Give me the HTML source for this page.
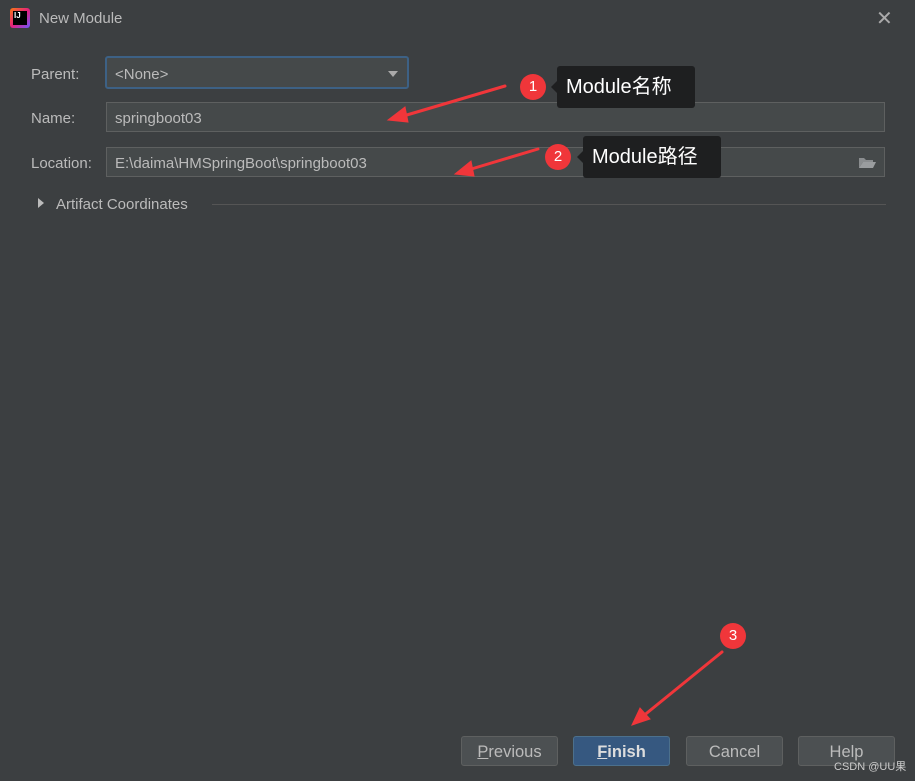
<!DOCTYPE html>
<html><head><style>
body{margin:0;width:915px;height:781px;background:#3c3f41;font-family:"Liberation Sans","Noto Sans CJK SC",sans-serif;color:#bbbbbb;position:relative;overflow:hidden}
.a{position:absolute}
.lbl{font-size:15px;color:#bbb}
.fld{position:absolute;background:#45494a;border:1px solid #5e6060;box-sizing:border-box;font-size:15px;color:#bbb;padding-left:8px;line-height:32px}
.btn{position:absolute;top:736px;width:97px;height:30px;box-sizing:border-box;border:1px solid #5e6060;background:#4c5052;border-radius:3px;font-size:16.5px;text-align:center;line-height:31px;color:#bbb}
.tip{position:absolute;background:#1e1f20;color:#fff;font-size:20px;border-radius:3px;line-height:43px;padding-left:9px;box-sizing:border-box}
.c{position:absolute;width:26px;height:26px;border-radius:50%;background:#f0363a;color:#fff;font-size:15px;text-align:center;line-height:26px}
</style></head><body>
<div class="a" style="left:10px;top:8px;width:20px;height:20px;background:linear-gradient(135deg,#f97a12,#e5217d,#6b57ff);border-radius:3px"></div>
<div class="a" style="left:13px;top:11px;width:14px;height:14px;background:#000;color:#fff;font-size:8px;font-weight:bold;line-height:9px;padding-left:1px;box-sizing:border-box">IJ</div>
<div class="a" style="left:39px;top:10px;font-size:15px;color:#bbb">New Module</div>
<div class="a" style="left:876px;top:6px;font-size:20px;color:#aaa">✕</div>
<div class="a lbl" style="left:31px;top:66px">Parent:</div>
<div class="a lbl" style="left:31px;top:110px">Name:</div>
<div class="a lbl" style="left:31px;top:155px">Location:</div>
<div class="fld" style="left:105px;top:56px;width:304px;height:33px;border:2px solid #3d6185;border-radius:3px;line-height:33px;background:#45494a">&lt;None&gt;</div>
<div class="a" style="left:388px;top:71px;width:0;height:0;border-left:5px solid transparent;border-right:5px solid transparent;border-top:6px solid #aaa"></div>
<div class="fld" style="left:106px;top:102px;width:779px;height:30px">springboot03</div>
<div class="fld" style="left:106px;top:147px;width:779px;height:30px">E:\daima\HMSpringBoot\springboot03</div>
<svg class="a" style="left:858px;top:155px" width="18" height="14"><path d="M1 3h5l2 2h7v2H5L1 13z" fill="#8a8d8f"/><path d="M5 7h13l-3 6H1z" fill="#9a9d9f"/></svg>
<div class="a" style="left:38px;top:198px;width:0;height:0;border-top:5px solid transparent;border-bottom:5px solid transparent;border-left:6px solid #bbb"></div>
<div class="a" style="left:56px;top:196px;font-size:15px">Artifact Coordinates</div>
<div class="a" style="left:212px;top:204px;width:674px;height:1px;background:#555"></div>
<svg class="a" style="left:0;top:0" width="915" height="781">
<g fill="#f0363a" stroke="#f0363a" stroke-linecap="round">
<line x1="505" y1="86" x2="400" y2="117" stroke-width="3"/><polygon points="388,120 405,107 408,122"/>
<line x1="538" y1="149" x2="468" y2="170" stroke-width="3"/><polygon points="455,174 471,161 474,176"/>
<line x1="722" y1="652" x2="642" y2="717" stroke-width="3"/><polygon points="632,725 640,708 650,719"/>
</g></svg>
<div class="tip" style="left:557px;top:66px;width:138px;height:42px">Module名称</div>
<div class="a" style="left:551px;top:81px;border-top:6px solid transparent;border-bottom:6px solid transparent;border-right:6px solid #1e1f20"></div>
<div class="c" style="left:520px;top:74px">1</div>
<div class="tip" style="left:583px;top:136px;width:138px;height:42px">Module路径</div>
<div class="a" style="left:577px;top:151px;border-top:6px solid transparent;border-bottom:6px solid transparent;border-right:6px solid #1e1f20"></div>
<div class="c" style="left:545px;top:144px">2</div>
<div class="c" style="left:720px;top:623px">3</div>
<div class="btn" style="left:461px"><u>P</u>revious</div>
<div class="btn" style="left:573px;background:#365880;border-color:#4c708c;color:#ddd;font-weight:bold"><u>F</u>inish</div>
<div class="btn" style="left:686px">Cancel</div>
<div class="btn" style="left:798px">Help</div>
<div class="a" style="left:834px;top:758px;font-size:11px;color:#ccc">CSDN @UU果</div>
</body></html>
